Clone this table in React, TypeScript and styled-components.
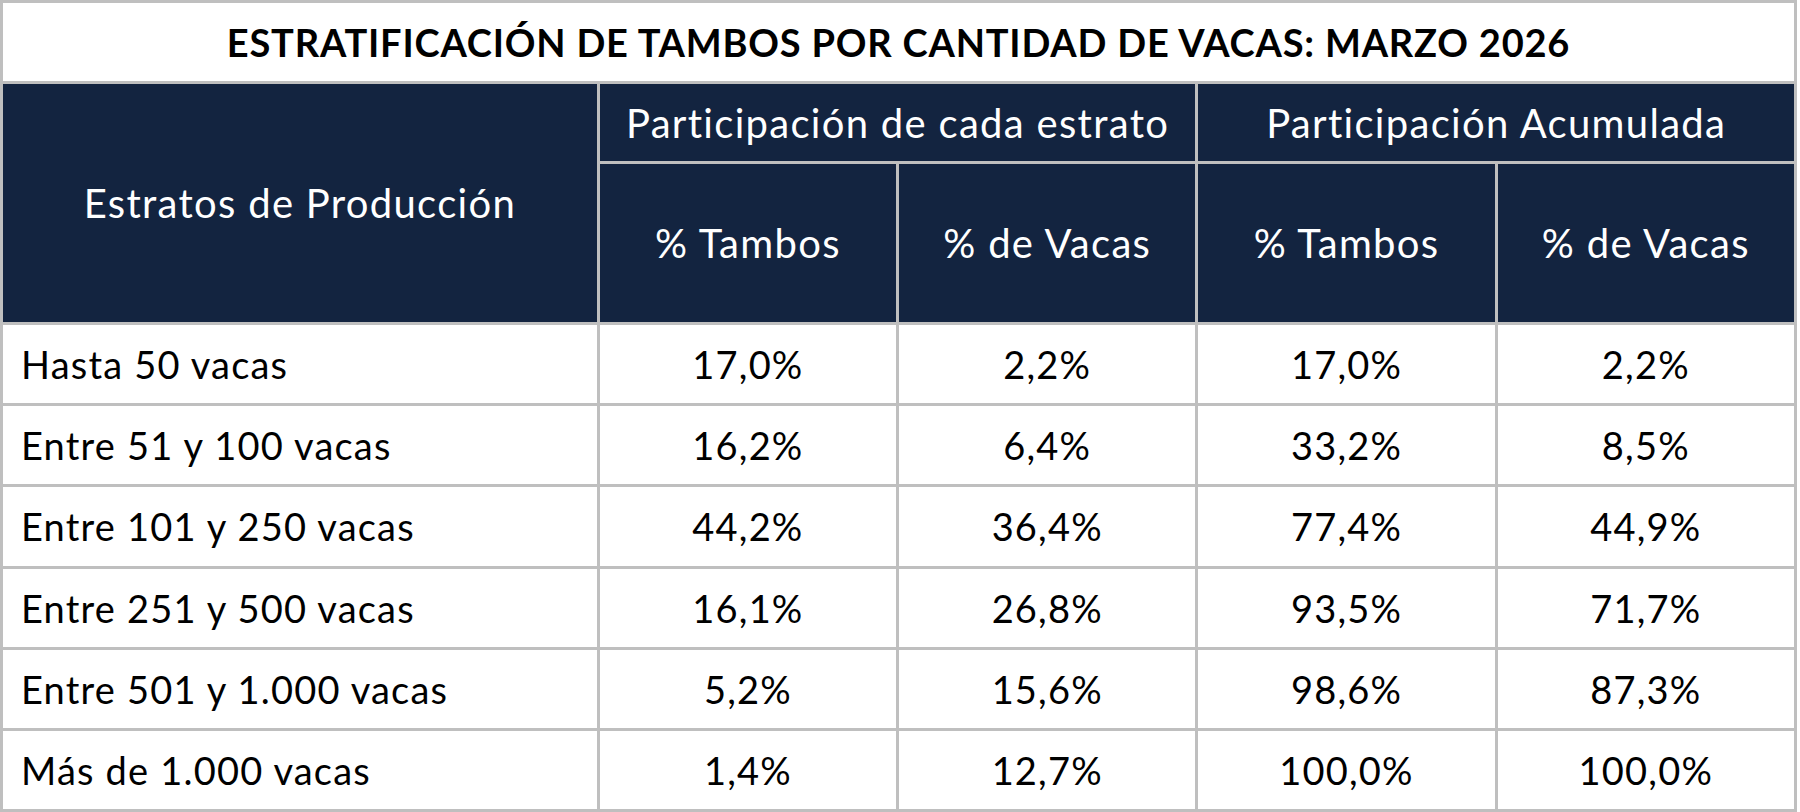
import React from 'react';
import styled, { createGlobalStyle } from 'styled-components';

const GlobalStyle = createGlobalStyle`
  html, body {
    margin: 0;
    padding: 0;
    background: #ffffff;
  }
  body {
    font-family: Lato, 'Liberation Sans', sans-serif;
  }
`;

const NAVY = '#132440';
const GRID = '#bfbfbf';

type Row = {
  label: string;
  values: string[];
};

const rows: Row[] = [
  { label: 'Hasta 50 vacas', values: ['17,0%', '2,2%', '17,0%', '2,2%'] },
  { label: 'Entre 51 y 100 vacas', values: ['16,2%', '6,4%', '33,2%', '8,5%'] },
  { label: 'Entre 101 y 250 vacas', values: ['44,2%', '36,4%', '77,4%', '44,9%'] },
  { label: 'Entre 251 y 500 vacas', values: ['16,1%', '26,8%', '93,5%', '71,7%'] },
  { label: 'Entre 501 y 1.000 vacas', values: ['5,2%', '15,6%', '98,6%', '87,3%'] },
  { label: 'Más de 1.000 vacas', values: ['1,4%', '12,7%', '100,0%', '100,0%'] },
];

const App = () => {
  return (
    <>
      <GlobalStyle />
      <Table>
        <colgroup>
          <LabelCol />
          <ValueCol />
          <ValueCol />
          <ValueCol />
          <ValueCol />
        </colgroup>
        <thead>
          <tr>
            <TitleCell colSpan={5}>
              ESTRATIFICACIÓN DE TAMBOS POR CANTIDAD DE VACAS: MARZO 2026
            </TitleCell>
          </tr>
          <tr>
            <HeadCell rowSpan={2}>Estratos de Producción</HeadCell>
            <HeadCell colSpan={2} $height={77}>
              Participación de cada estrato
            </HeadCell>
            <HeadCell colSpan={2} $height={77}>
              Participación Acumulada
            </HeadCell>
          </tr>
          <tr>
            <HeadCell $height={158}>% Tambos</HeadCell>
            <HeadCell $height={158}>% de Vacas</HeadCell>
            <HeadCell $height={158}>% Tambos</HeadCell>
            <HeadCell $height={158}>% de Vacas</HeadCell>
          </tr>
        </thead>
        <tbody>
          {rows.map((r) => (
            <tr key={r.label}>
              <LabelCell>{r.label}</LabelCell>
              {r.values.map((v, i) => (
                <ValueCell key={i}>{v}</ValueCell>
              ))}
            </tr>
          ))}
        </tbody>
      </Table>
    </>
  );
};

const Table = styled.table`
  width: 1797px;
  border-collapse: collapse;
  table-layout: fixed;
  border: 3px solid ${GRID};

  td,
  th {
    border: 3px solid ${GRID};
    padding: 0;
  }
`;

const LabelCol = styled.col`
  width: 33.3%;
`;

const ValueCol = styled.col`
  width: 16.7%;
`;

const TitleCell = styled.th`
  height: 78px;
  background: #ffffff;
  color: #000000;
  font-weight: 700;
  font-size: 38px;
  letter-spacing: 0.8px;
  text-align: center;
  vertical-align: middle;
`;

const HeadCell = styled.th<{ $height?: number }>`
  height: ${(p) => (p.$height ? `${p.$height}px` : 'auto')};
  background: ${NAVY};
  color: #ffffff;
  font-weight: 400;
  font-size: 40px;
  letter-spacing: 1.3px;
  text-align: center;
  vertical-align: middle;
`;

const LabelCell = styled.td`
  height: 78.2px;
  color: #000000;
  font-size: 38px;
  letter-spacing: 1.2px;
  text-align: left;
  vertical-align: middle;
  && {
    padding-left: 18px;
  }
`;

const ValueCell = styled.td`
  height: 78.2px;
  color: #000000;
  font-size: 38px;
  letter-spacing: 1.2px;
  text-align: center;
  vertical-align: middle;
`;

export default App;
